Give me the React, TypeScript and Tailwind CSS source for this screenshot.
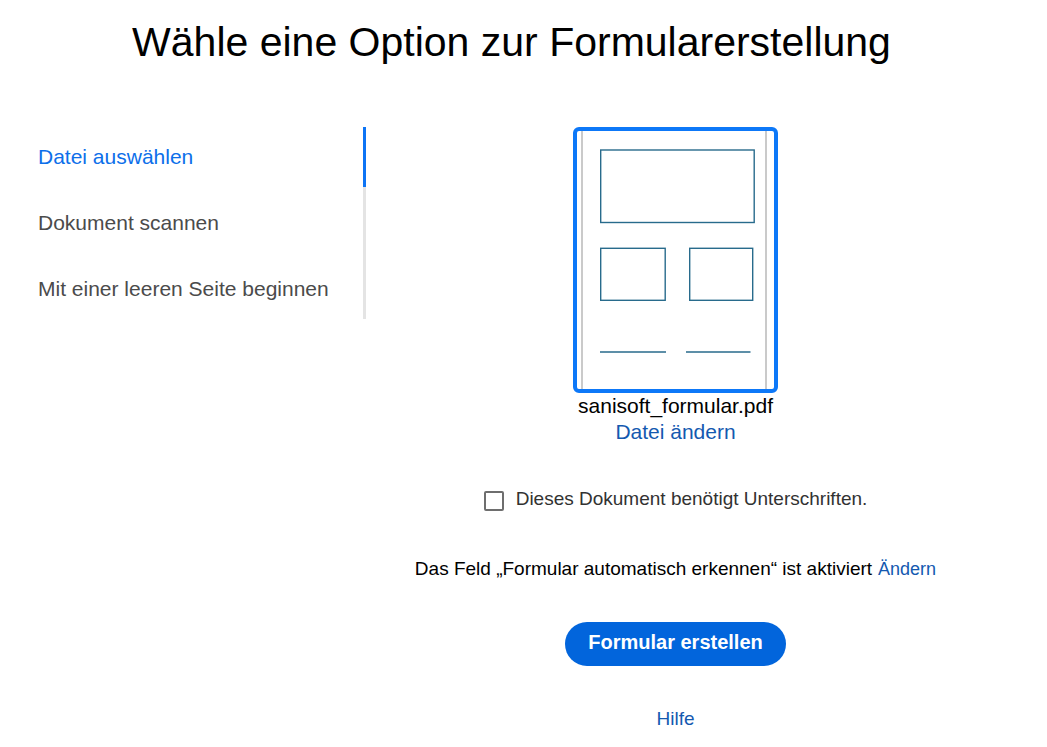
import React, { useState } from 'react';

const sources = ['Datei auswählen', 'Dokument scannen', 'Mit einer leeren Seite beginnen'];

const FormPreview: React.FC = () => (
  <svg viewBox="0 0 197 258" className="block w-full" fill="none" aria-hidden="true">
    <path d="M5 0V258M189 0V258" stroke="#b8b8b8" strokeWidth="1.5" />
    <g stroke="#286b8c" strokeWidth="1.4">
      <rect x="23.7" y="19" width="153.5" height="72.5" />
      <rect x="23.7" y="117.3" width="64.5" height="52" />
      <rect x="112.7" y="117.3" width="63" height="52" />
      <path d="M23 221H89M109 221H173.5" strokeWidth="1.6" />
    </g>
  </svg>
);

const App: React.FC = () => {
  const [selected, setSelected] = useState(sources[0]);
  const [needsSignature, setNeedsSignature] = useState(false);

  return (
    <main className="min-h-screen bg-white pt-4 pr-[62px] pl-[38px] font-['Liberation_Sans',Arial,sans-serif] text-black">
      <h1 className="text-center text-[41px] leading-[52px]">Wähle eine Option zur Formularerstellung</h1>

      <div className="mt-[59px] flex items-start">
        <nav className="flex w-[328px] shrink-0 flex-col gap-[6px] border-r-3 border-[#e4e4e4]">
          {sources.map((source) => {
            const isActive = source === selected;
            return (
              <button
                key={source}
                type="button"
                onClick={() => setSelected(source)}
                className={`-mr-[3px] flex h-[60px] items-center border-r-3 text-left text-[21px] leading-7 ${
                  isActive ? 'border-[#0d74f5] text-[#0d6fea]' : 'border-transparent text-[#4b4b4b]'
                }`}
              >
                {source}
              </button>
            );
          })}
        </nav>

        <section className="flex flex-1 flex-col items-center">
          <div className="w-[205px] overflow-hidden rounded-md border-4 border-[#0d78f8]">
            <FormPreview />
          </div>
          <p className="text-[21px] leading-[26px]">sanisoft_formular.pdf</p>
          <a href="#" className="text-[21px] leading-[26px] text-[#1459b0]">Datei ändern</a>

          <label className="mt-10 flex items-end gap-3 text-[19px] leading-7 text-[#323232]">
            <input
              type="checkbox"
              checked={needsSignature}
              onChange={(e) => setNeedsSignature(e.target.checked)}
              className="mb-[2px] size-5 appearance-none rounded-xs border-2 border-[#6e6e6e] bg-white checked:bg-[#1473e6]"
            />
            Dieses Dokument benötigt Unterschriften.
          </label>

          <p className="mt-[42px] flex items-baseline gap-[6px] text-[19px] leading-7">
            Das Feld „Formular automatisch erkennen“ ist aktiviert
            <a href="#" className="text-[18px] leading-7 text-[#1459b0]">Ändern</a>
          </p>

          <button type="button" className="mt-[39px] h-11 rounded-full bg-[#0265dc] px-[23px] pb-1 text-xl font-bold text-white">
            Formular erstellen
          </button>

          <a href="#" className="mt-[39px] text-[19px] leading-7 text-[#1459b0]">Hilfe</a>
        </section>
      </div>
    </main>
  );
};

export default App;
